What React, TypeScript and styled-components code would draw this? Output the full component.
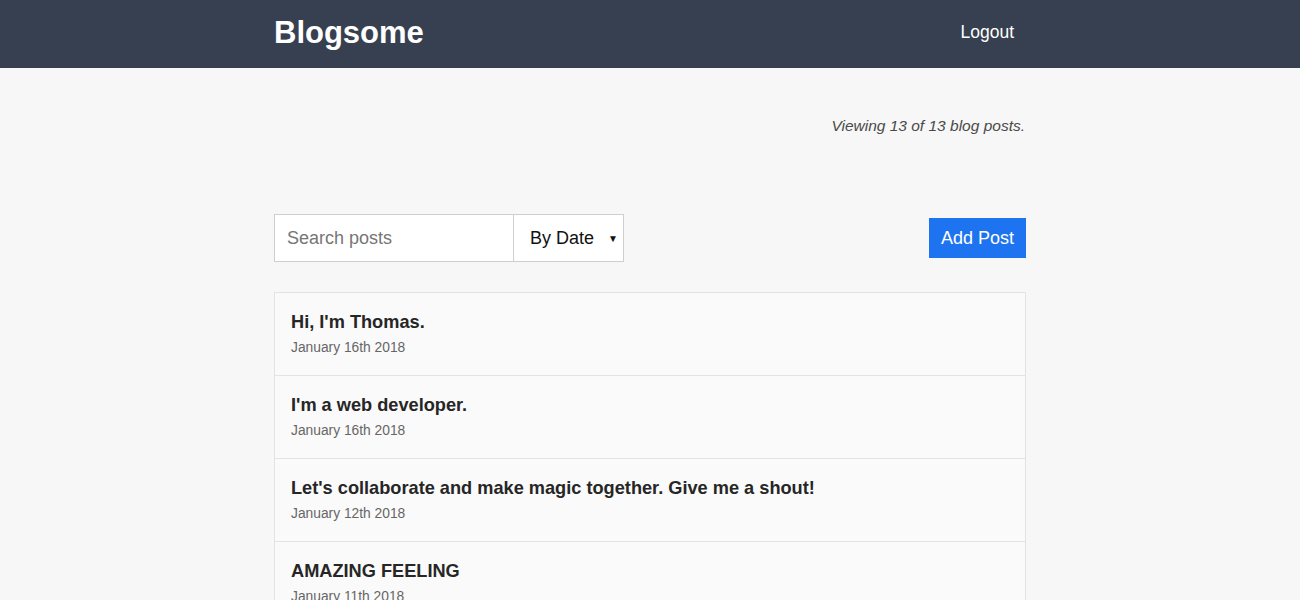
import React, { useState } from 'react';
import styled, { createGlobalStyle } from 'styled-components';

const GlobalStyle = createGlobalStyle`
  html, body {
    margin: 0;
    padding: 0;
    background: #f7f7f7;
    font-family: Arial, "Liberation Sans", Helvetica, sans-serif;
    color: #2a2a2a;
  }
  * {
    box-sizing: border-box;
  }
`;

const posts = [
  { title: "Hi, I'm Thomas.", date: 'January 16th 2018' },
  { title: "I'm a web developer.", date: 'January 16th 2018' },
  { title: "Let's collaborate and make magic together. Give me a shout!", date: 'January 12th 2018' },
  { title: 'AMAZING FEELING', date: 'January 11th 2018' },
  { title: 'Another one', date: 'January 10th 2018' },
];

const App: React.FC = () => {
  const [search, setSearch] = useState('');
  const [sortBy, setSortBy] = useState('date');

  return (
    <>
      <GlobalStyle />
      <Header>
        <HeaderInner>
          <Brand href="#">Blogsome</Brand>
          <LogoutLink href="#">Logout</LogoutLink>
        </HeaderInner>
      </Header>
      <Container>
        <Summary>Viewing 13 of 13 blog posts.</Summary>
        <Toolbar>
          <Filters>
            <SearchInput
              type="text"
              placeholder="Search posts"
              value={search}
              onChange={(e) => setSearch(e.target.value)}
            />
            <SelectWrap>
              <SortSelect value={sortBy} onChange={(e) => setSortBy(e.target.value)}>
                <option value="date">By Date</option>
                <option value="title">By Title</option>
              </SortSelect>
              <Caret>▼</Caret>
            </SelectWrap>
          </Filters>
          <AddButton>Add Post</AddButton>
        </Toolbar>
        <PostList>
          {posts.map((post, i) => (
            <PostItem key={i}>
              <PostTitle>{post.title}</PostTitle>
              <PostDate>{post.date}</PostDate>
            </PostItem>
          ))}
        </PostList>
      </Container>
    </>
  );
};

const Header = styled.header`
  background: #364051;
  height: 68px;
`;

const HeaderInner = styled.div`
  width: 752px;
  height: 100%;
  margin: 0 auto;
  display: flex;
  align-items: center;
  justify-content: space-between;
`;

const Brand = styled.a`
  color: #fff;
  font-size: 31px;
  font-weight: bold;
  text-decoration: none;
  line-height: 1;
  margin-top: -4px;
`;

const LogoutLink = styled.a`
  color: #fff;
  font-size: 17.5px;
  text-decoration: none;
  padding: 0 12px 0 11px;
  margin-top: -4px;
`;

const Container = styled.main`
  width: 752px;
  margin: 0 auto;
`;

const Summary = styled.p`
  margin: 0;
  padding-top: 48px;
  text-align: right;
  font-style: italic;
  font-size: 15.5px;
  line-height: 20px;
  color: #4a4a4a;
  padding-right: 1px;
`;

const Toolbar = styled.div`
  display: flex;
  align-items: center;
  justify-content: space-between;
  margin-top: 78px;
`;

const Filters = styled.div`
  display: flex;
`;

const SearchInput = styled.input`
  width: 240px;
  height: 48px;
  border: 1px solid #cfcfcf;
  background: #fff;
  padding: 0 12px;
  font-family: inherit;
  font-size: 18px;
  color: #333;
  outline: none;
  &::placeholder {
    color: #767676;
  }
`;

const SelectWrap = styled.div`
  position: relative;
  width: 110px;
  height: 48px;
`;

const SortSelect = styled.select`
  appearance: none;
  width: 100%;
  height: 100%;
  border: 1px solid #cfcfcf;
  border-left: none;
  border-radius: 0;
  background: #fff;
  padding: 0 0 0 16px;
  font-family: inherit;
  font-size: 18px;
  color: #111;
  outline: none;
`;

const Caret = styled.span`
  position: absolute;
  right: 6px;
  top: 50%;
  transform: translateY(-50%);
  font-size: 10px;
  color: #111;
  pointer-events: none;
`;

const AddButton = styled.button`
  height: 40px;
  padding: 0 12px;
  background: #1e74f0;
  color: #fff;
  border: none;
  font-family: inherit;
  font-size: 18px;
  cursor: pointer;
`;

const PostList = styled.ul`
  list-style: none;
  margin: 30px 0 0;
  padding: 0;
  border: 1px solid #e3e3e3;
  border-bottom: none;
`;

const PostItem = styled.li`
  background: #fafafa;
  padding: 18px 16px;
  border-bottom: 1px solid #e3e3e3;
`;

const PostTitle = styled.h3`
  margin: 0 0 6px;
  font-size: 18.2px;
  line-height: 22px;
  font-weight: bold;
  color: #262626;
`;

const PostDate = styled.p`
  margin: 0;
  font-size: 13.8px;
  line-height: 18px;
  color: #666;
`;

export default App;
